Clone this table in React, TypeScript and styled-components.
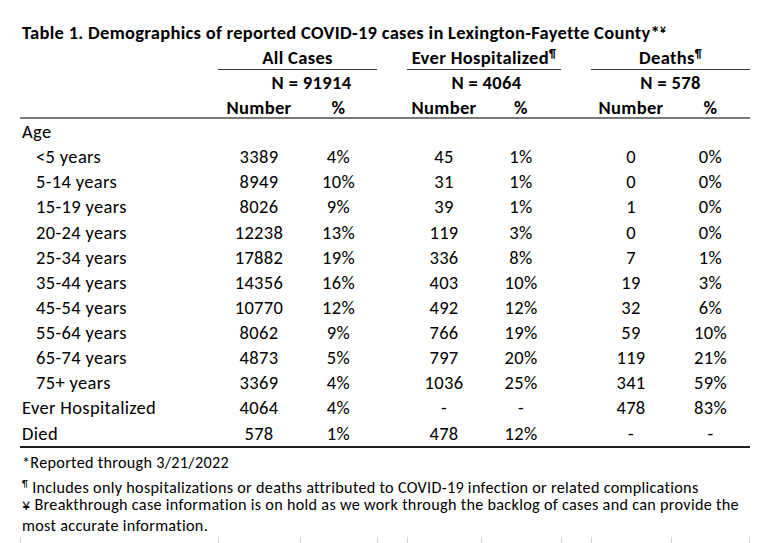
import styled, { createGlobalStyle } from "styled-components";

const GlobalStyle = createGlobalStyle`
  html, body {
    margin: 0;
    background: #ffffff;
  }
  body {
    font-family: Carlito, Calibri, Lato, "Liberation Sans", sans-serif;
    color: #000000;
  }
`;

const COLS = "198px 82px 77px 30px 74px 80px 30px 80px 79px";

const Page = styled.div`
  padding: 20px 18px 0 20px;
  width: 730px;
`;

const Title = styled.h1`
  margin: 0 0 0 2px;
  font-size: 18.5px;
  letter-spacing: 0.3px;
  line-height: 25px;
  font-weight: 700;
  white-space: nowrap;
`;

const Sup = styled.sup`
  font-size: 0.62em;
  line-height: 0;
  vertical-align: 0.55em;
`;

const Row = styled.div<{ $height?: number; $lh?: number; $rule?: string }>`
  display: grid;
  grid-template-columns: ${COLS};
  height: ${(p) => p.$height ?? 25}px;
  line-height: ${(p) => p.$lh ?? p.$height ?? 25}px;
  font-size: 18.5px;
  letter-spacing: 0.35px;
  box-sizing: content-box;
  border-bottom: ${(p) => p.$rule ?? "none"};
`;

const Cell = styled.div<{ $indent?: boolean; $bold?: boolean; $shift?: number }>`
  text-align: ${(p) => (p.$indent === undefined ? "center" : "left")};
  padding-left: ${(p) => (p.$indent ? 16 : p.$indent === false ? 2 : p.$shift ?? 0)}px;
  font-weight: ${(p) => (p.$bold ? 700 : 400)};
  white-space: nowrap;
`;

const Group = styled.div<{ $col: number; $underline?: boolean }>`
  grid-column: ${(p) => p.$col} / span 2;
  text-align: center;
  font-weight: 700;
  white-space: nowrap;
  border-bottom: ${(p) => (p.$underline ? "1px solid #3a3a3a" : "none")};
  height: 24px;
`;

const Notes = styled.div`
  padding-top: 2px;
  font-size: 16.2px;
  letter-spacing: 0.3px;
  line-height: 25px;
  padding-left: 2px;
  white-space: nowrap;
`;

const NoteBlock = styled.div`
  margin-top: -4.5px;
  line-height: 20.7px;
`;

const Ticks = styled.div`
  display: grid;
  grid-template-columns: ${COLS};
  margin-top: 0;
  height: 10px;

  & > span {
    border-left: 1px solid #d4d4d4;
  }
  & > span:last-child {
    border-right: 1px solid #d4d4d4;
  }
`;

type Line = [string, number | string, string, number | string, string, number | string, string];

const ages: Line[] = [
  ["<5 years", 3389, "4%", 45, "1%", 0, "0%"],
  ["5-14 years", 8949, "10%", 31, "1%", 0, "0%"],
  ["15-19 years", 8026, "9%", 39, "1%", 1, "0%"],
  ["20-24 years", 12238, "13%", 119, "3%", 0, "0%"],
  ["25-34 years", 17882, "19%", 336, "8%", 7, "1%"],
  ["35-44 years", 14356, "16%", 403, "10%", 19, "3%"],
  ["45-54 years", 10770, "12%", 492, "12%", 32, "6%"],
  ["55-64 years", 8062, "9%", 766, "19%", 59, "10%"],
  ["65-74 years", 4873, "5%", 797, "20%", 119, "21%"],
  ["75+ years", 3369, "4%", 1036, "25%", 341, "59%"],
];

const totals: Line[] = [
  ["Ever Hospitalized", 4064, "4%", "-", "-", 478, "83%"],
  ["Died", 578, "1%", 478, "12%", "-", "-"],
];

const BODY_ROW = 25.14;

const DataRow = ({ line, indent, last }: { line: Line; indent: boolean; last?: boolean }) => (
  <Row $height={BODY_ROW} $rule={last ? "2px solid #1e1e1e" : undefined}>
    <Cell $indent={indent}>{line[0]}</Cell>
    <Cell>{line[1]}</Cell>
    <Cell>{line[2]}</Cell>
    <span />
    <Cell>{line[3]}</Cell>
    <Cell>{line[4]}</Cell>
    <span />
    <Cell>{line[5]}</Cell>
    <Cell>{line[6]}</Cell>
  </Row>
);

export default function App() {
  return (
    <>
      <GlobalStyle />
      <Page>
        <Title>
          Table 1. Demographics of reported COVID-19 cases in Lexington-Fayette County*<Sup>¥</Sup>
        </Title>

        <Row>
          <Group $col={2} $underline>All Cases</Group>
          <Group $col={5} $underline>
            Ever Hospitalized<Sup>¶</Sup>
          </Group>
          <Group $col={8} $underline>
            Deaths<Sup>¶</Sup>
          </Group>
        </Row>
        <Row>
          <Cell />
          <Cell $bold style={{ gridColumn: "2 / span 2" }} $shift={28}>
            N = 91914
          </Cell>
          <Cell $bold style={{ gridColumn: "5 / span 2" }} $shift={5}>
            N = 4064
          </Cell>
          <Cell $bold style={{ gridColumn: "8 / span 2" }}>
            N = 578
          </Cell>
        </Row>
        <Row $height={22} $lh={26} $rule="2px solid #7a7a7a">
          <span />
          <Cell $bold>Number</Cell>
          <Cell $bold>%</Cell>
          <span />
          <Cell $bold>Number</Cell>
          <Cell $bold>%</Cell>
          <span />
          <Cell $bold>Number</Cell>
          <Cell $bold>%</Cell>
        </Row>

        <Row $height={BODY_ROW}>
          <Cell $indent={false}>Age</Cell>
        </Row>
        {ages.map((line) => (
          <DataRow key={line[0]} line={line} indent />
        ))}
        {totals.map((line, i) => (
          <DataRow key={line[0]} line={line} indent={false} last={i === totals.length - 1} />
        ))}

        <Notes>
          <div>*Reported through 3/21/2022</div>
          <div>
            <Sup>¶</Sup> Includes only hospitalizations or deaths attributed to COVID-19 infection or related
            complications
          </div>
          <NoteBlock>
            <div>¥ Breakthrough case information is on hold as we work through the backlog of cases and can provide the</div>
            <div>most accurate information.</div>
          </NoteBlock>
        </Notes>

        <Ticks>
          {Array.from({ length: 9 }, (_, i) => (
            <span key={i} />
          ))}
        </Ticks>
      </Page>
    </>
  );
}
